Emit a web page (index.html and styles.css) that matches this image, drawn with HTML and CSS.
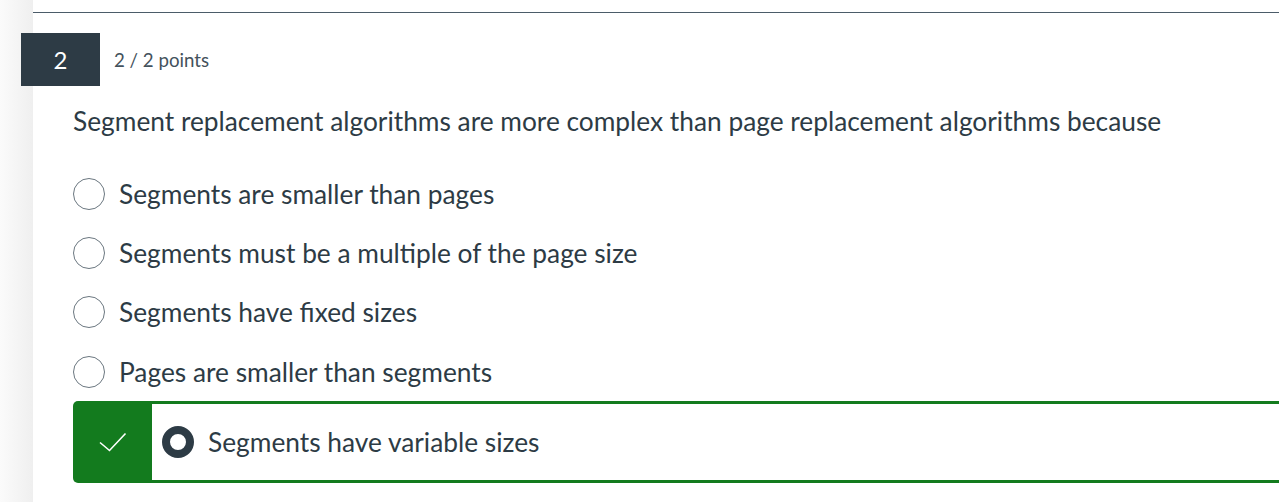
FILE: index.html
```html
<!DOCTYPE html>
<html lang="en">
<head>
<meta charset="utf-8">
<title>Question 2</title>
<link rel="stylesheet" href="styles.css">
</head>
<body>
<div class="page">
  <div class="strip"></div>
  <div class="main">
    <div class="rule"></div>
    <div class="header">
      <div class="badge">2</div>
      <div class="points">2 / 2 points</div>
    </div>
    <div class="question">Segment replacement algorithms are more complex than page replacement algorithms because</div>
    <div class="options">
      <div class="option"><span class="radio"></span><span class="label">Segments are smaller than pages</span></div>
      <div class="option"><span class="radio"></span><span class="label">Segments must be a multiple of the page size</span></div>
      <div class="option"><span class="radio"></span><span class="label">Segments have fixed sizes</span></div>
      <div class="option"><span class="radio"></span><span class="label">Pages are smaller than segments</span></div>
      <div class="correct">
        <div class="mark">
          <svg width="28" height="20" viewBox="0 0 28 20"><path d="M1 10.5 L10.5 18.5 L26.5 1.5" fill="none" stroke="#fff" stroke-width="1.6"/></svg>
        </div>
        <div class="correct-body">
          <span class="radio selected"></span><span class="label">Segments have variable sizes</span>
        </div>
      </div>
    </div>
  </div>
</div>
</body>
</html>
```
FILE: styles.css
```css
html, body {
  margin: 0;
  padding: 0;
  background: #fff;
}
body {
  font-family: Lato, "Open Sans", sans-serif;
  color: #2d3b45;
}
.page {
  display: flex;
  height: 502px;
  overflow: hidden;
}
.strip {
  width: 33px;
  flex: none;
  background: linear-gradient(to right, #fbfbfb, #efefef);
}
.main {
  flex: 1;
  padding-top: 12px;
  min-width: 0;
}
.rule {
  border-top: 1px solid #4b5c69;
}
.header {
  display: flex;
  align-items: center;
  margin-top: 20px;
}
.badge {
  width: 79px;
  height: 53px;
  margin-left: -12px;
  background: #2d3b45;
  color: #fff;
  font-size: 24px;
  display: flex;
  align-items: center;
  justify-content: center;
}
.points {
  margin-left: 14px;
  font-size: 18.7px;
  color: #44525c;
}
.question {
  margin: 18px 0 0 40px;
  font-size: 26.3px;
  line-height: 34px;
}
.options {
  margin: 26.4px 0 0 40px;
}
.option {
  display: flex;
  align-items: center;
  height: 59.2px;
}
.radio {
  width: 30px;
  height: 30px;
  border: 1px solid #6b7780;
  border-radius: 50%;
  box-sizing: content-box;
  flex: none;
  background: #fff;
}
.label {
  margin-left: 14px;
  font-size: 26.3px;
}
.correct {
  display: flex;
  height: 82px;
  margin-right: -10px;
}
.mark {
  width: 79px;
  flex: none;
  background: #137b1e;
  border-radius: 5px 0 0 5px;
  display: flex;
  align-items: center;
  justify-content: center;
}
.correct-body {
  flex: 1;
  display: flex;
  align-items: center;
  border-top: 3px solid #137b1e;
  border-bottom: 3px solid #137b1e;
  padding-left: 10px;
}
.radio.selected {
  width: 16px;
  height: 16px;
  border: 8px solid #2d3b45;
}
.correct-body .label {
  margin-left: 14px;
}
```
